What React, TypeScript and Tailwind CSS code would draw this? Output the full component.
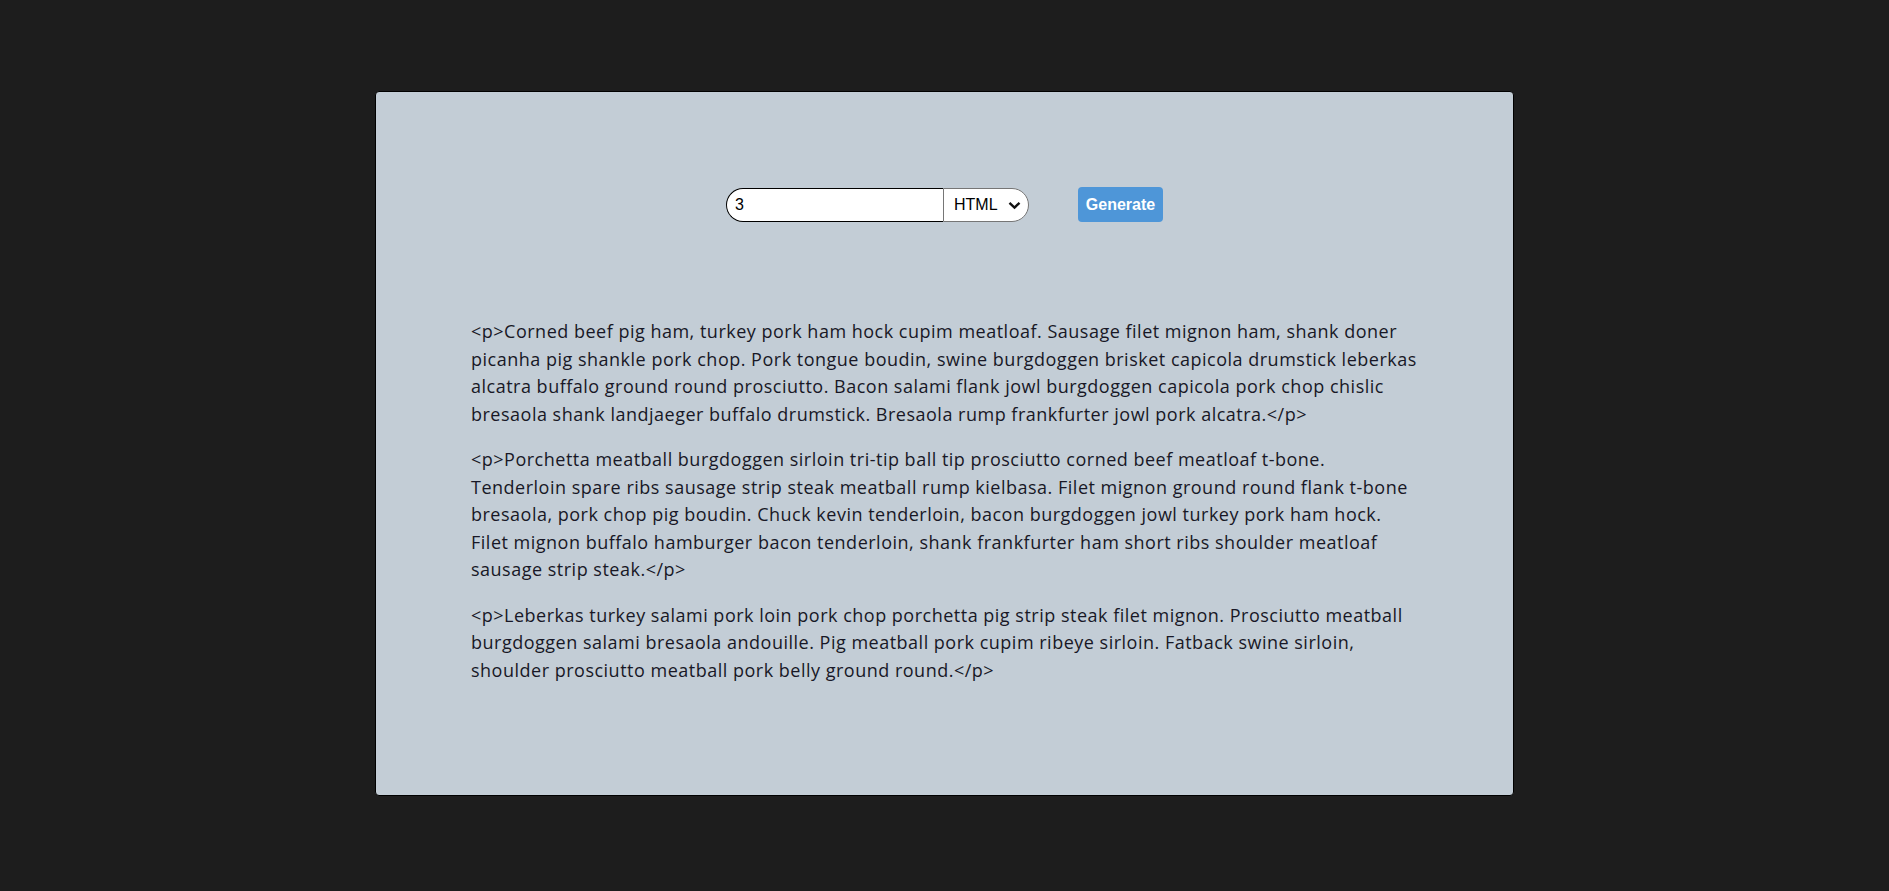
import { useState } from 'react'

const paragraphs = [
  'Corned beef pig ham, turkey pork ham hock cupim meatloaf. Sausage filet mignon ham, shank doner picanha pig shankle pork chop. Pork tongue boudin, swine burgdoggen brisket capicola drumstick leberkas alcatra buffalo ground round prosciutto. Bacon salami flank jowl burgdoggen capicola pork chop chislic bresaola shank landjaeger buffalo drumstick. Bresaola rump frankfurter jowl pork alcatra.',
  'Porchetta meatball burgdoggen sirloin tri-tip ball tip prosciutto corned beef meatloaf t-bone. Tenderloin spare ribs sausage strip steak meatball rump kielbasa. Filet mignon ground round flank t-bone bresaola, pork chop pig boudin. Chuck kevin tenderloin, bacon burgdoggen jowl turkey pork ham hock. Filet mignon buffalo hamburger bacon tenderloin, shank frankfurter ham short ribs shoulder meatloaf sausage strip steak.',
  'Leberkas turkey salami pork loin pork chop porchetta pig strip steak filet mignon. Prosciutto meatball burgdoggen salami bresaola andouille. Pig meatball pork cupim ribeye sirloin. Fatback swine sirloin, shoulder prosciutto meatball pork belly ground round.',
]

export default function App(): React.JSX.Element {
  const [count, setCount] = useState('3')
  const [format, setFormat] = useState('html')

  return (
    <div className="min-h-screen bg-[#1d1d1d] pt-[91px]">
      <div className="mx-auto w-[1139px] h-[705px] bg-[#c3cdd6] border border-black rounded-[4px] px-[95px] pt-[95px]">
        <form
          className="flex justify-center items-center h-[35px] mb-[96px] font-['Liberation_Sans',Arial,sans-serif]"
          onSubmit={(e) => e.preventDefault()}
        >
          <input
            type="text"
            value={count}
            onChange={(e) => setCount(e.target.value)}
            className="w-[217px] h-[34px] bg-white border border-black border-r-0 rounded-l-[17px] pl-[8px] text-[16px] text-black outline-none"
          />
          <div className="relative">
            <select
              value={format}
              onChange={(e) => setFormat(e.target.value)}
              className="appearance-none w-[86px] h-[34px] bg-white border border-[#767676] rounded-r-[17px] pl-[10px] text-[16px] text-black outline-none"
            >
              <option value="html">HTML</option>
              <option value="text">Text</option>
            </select>
            <svg
              className="absolute right-[8px] top-[13px] pointer-events-none"
              width="13"
              height="9"
              viewBox="0 0 13 9"
            >
              <path d="M1.5 1.8 L6.5 6.6 L11.5 1.8" fill="none" stroke="#111" strokeWidth="2.4" />
            </svg>
          </div>
          <button
            type="submit"
            className="ml-[49px] w-[85px] h-[35px] bg-[#4e96d8] text-white font-bold text-[16px] rounded-[4px]"
          >
            Generate
          </button>
        </form>

        <div className="font-['Open_Sans',sans-serif] text-[18px] leading-[27.5px] tracking-[0.5px] text-[#181826]">
          {paragraphs.map((p, i) => (
            <p key={i} className="my-[18px]">
              {'<p>' + p + '</p>'}
            </p>
          ))}
        </div>
      </div>
    </div>
  )
}
